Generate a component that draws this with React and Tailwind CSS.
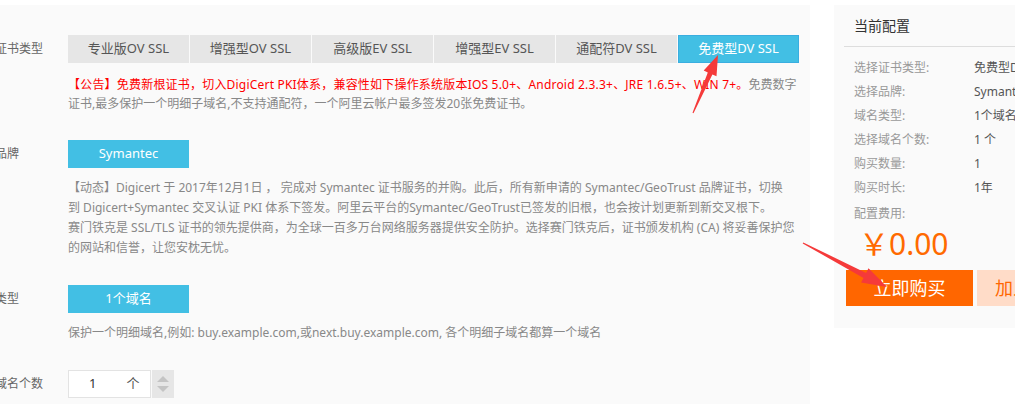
import React from 'react';

const font = { fontFamily: '"Noto Sans", "Noto Sans CJK SC", sans-serif' };

const tabs = ['专业版OV SSL', '增强型OV SSL', '高级版EV SSL', '增强型EV SSL', '通配符DV SSL', '免费型DV SSL'];

const summary = [
  ['选择证书类型:', '免费型DV SSL'],
  ['选择品牌:', 'Symantec'],
  ['域名类型:', '1个域名'],
  ['选择域名个数:', '1 个'],
  ['购买数量:', '1'],
  ['购买时长:', '1年'],
];

function Row({ label, children, className = '' }) {
  return (
    <div className={`flex items-center ${className}`}>
      <div className="w-[97px] shrink-0 text-[12px] text-[#666] whitespace-nowrap">{label}</div>
      {children}
    </div>
  );
}

function BlueButton({ children }) {
  return (
    <div className="w-[121px] h-[28px] flex items-center justify-center bg-[#42bfe4] text-white text-[13px]">
      {children}
    </div>
  );
}

function Arrows() {
  return (
    <svg className="absolute inset-0 pointer-events-none" width="1015" height="404" viewBox="0 0 1015 404">
      <polygon
        fill="#f53a3a"
        points="692.5,112.8 707.8,72.4 703.7,70.6 718,55 716.5,76.2 712.4,74.4 693.5,113.2"
      />
      <polygon
        fill="#f53a3a"
        points="803.3,242.5 866.1,272.9 868.5,268.3 887,287 861.1,282.5 863.5,277.9 802.7,243.5"
      />
    </svg>
  );
}

export default function App() {
  return (
    <div className="relative w-[1015px] h-[404px] overflow-hidden bg-white flex items-start" style={font}>
      {/* left: options */}
      <div className="w-[810px] shrink-0 h-[399px] mt-[5px] bg-[#fafafa] overflow-hidden">
        <div className="-ml-[29px] pt-[30px]">
          <Row label="选择证书类型" className="h-[28px]">
            <div className="flex gap-px">
              {tabs.map((t, i) => (
                <div
                  key={t}
                  className={
                    i === tabs.length - 1
                      ? 'w-[121px] h-[28px] flex items-center justify-center bg-[#42bfe4] border border-[#3aaee0] text-white text-[13px] whitespace-nowrap'
                      : 'w-[121px] h-[28px] flex items-center justify-center bg-[#e6e6e6] text-[#555] text-[13px] whitespace-nowrap'
                  }
                >
                  {t}
                </div>
              ))}
            </div>
          </Row>
          <div className="ml-[97px] mt-[12px] text-[12px] leading-[19px] text-[#888] whitespace-nowrap">
            <div>
              <span className="text-[#f00] tracking-[0.2px]">
                【公告】免费新根证书，切入DigiCert PKI体系，兼容性如下操作系统版本IOS 5.0+、Android 2.3.3+、JRE 1.6.5+、WIN 7+。
              </span>
              免费数字
            </div>
            <div>证书,最多保护一个明细子域名,不支持通配符，一个阿里云帐户最多签发20张免费证书。</div>
          </div>

          <Row label="选择品牌" className="mt-[27px] h-[28px]">
            <BlueButton>Symantec</BlueButton>
          </Row>
          <div className="ml-[97px] mt-[10px] text-[12px] leading-[20px] text-[#888] whitespace-nowrap">
            <div>【动态】Digicert 于 2017年12月1日 ， 完成对 Symantec 证书服务的并购。此后，所有新申请的 Symantec/GeoTrust 品牌证书，切换</div>
            <div>到 Digicert+Symantec 交叉认证 PKI 体系下签发。阿里云平台的Symantec/GeoTrust已签发的旧根，也会按计划更新到新交叉根下。</div>
            <div>赛门铁克是 SSL/TLS 证书的领先提供商，为全球一百多万台网络服务器提供安全防护。选择赛门铁克后，证书颁发机构 (CA) 将妥善保护您</div>
            <div>的网站和信誉，让您安枕无忧。</div>
          </div>

          <Row label="域名类型" className="mt-[27px] h-[28px]">
            <BlueButton>1个域名</BlueButton>
          </Row>
          <div className="ml-[97px] mt-[10px] text-[12px] leading-[20px] text-[#888] whitespace-nowrap">
            保护一个明细域名,例如: buy.example.com,或next.buy.example.com, 各个明细子域名都算一个域名
          </div>

          <Row label="选择域名个数" className="mt-[27px] h-[28px]">
            <div className="flex items-stretch h-[28px] gap-[1px]">
              <div className="w-[83px] bg-white border border-[#e3e3e3] flex items-center text-[13px] text-[#333]">
                <span className="ml-[20px]">1</span>
                <span className="ml-[30px] text-[#555]">个</span>
              </div>
              <div className="w-[22px] bg-[#e6e6e6] flex flex-col items-center justify-center gap-[4px]">
                <div className="w-0 h-0 border-l-[6px] border-r-[6px] border-b-[6px] border-l-transparent border-r-transparent border-b-[#c4c4c4]" />
                <div className="w-0 h-0 border-l-[6px] border-r-[6px] border-t-[6px] border-l-transparent border-r-transparent border-t-[#c4c4c4]" />
              </div>
            </div>
          </Row>
        </div>
      </div>

      {/* right: current config */}
      <div className="ml-[24px] w-[280px] shrink-0 mt-[5px] bg-[#fafafa] pb-[22px]">
        <div className="pt-[11px] pl-[20px] text-[14px] leading-[20px] text-[#333] whitespace-nowrap">当前配置</div>
        <div className="mt-[10px] ml-[10px] h-px bg-[#ddd]" />
        <div className="mt-[9px] pl-[20px] text-[12px] leading-[24px]">
          {summary.map(([k, v]) => (
            <div key={k} className="flex whitespace-nowrap">
              <div className="w-[120px] text-[#999]">{k}</div>
              <div className="text-[#555]">{v}</div>
            </div>
          ))}
          <div className="mt-[2px] text-[#999]">配置费用:</div>
        </div>
        <div className="pl-[25px] text-[30px] leading-[36px] text-[#ff6a00] whitespace-nowrap">￥0.00</div>
        <div className="mt-[8px] ml-[12px] flex gap-[4px]">
          <div className="w-[127px] shrink-0 h-[36px] bg-[#ff6600] text-white text-[18px] flex items-center justify-center whitespace-nowrap">
            立即购买
          </div>
          <div className="w-[127px] shrink-0 h-[36px] bg-[#ffdcc8] text-[#ff6600] text-[18px] flex items-center pl-[18px] whitespace-nowrap">
            加入购物车
          </div>
        </div>
      </div>

      <Arrows />
    </div>
  );
}
